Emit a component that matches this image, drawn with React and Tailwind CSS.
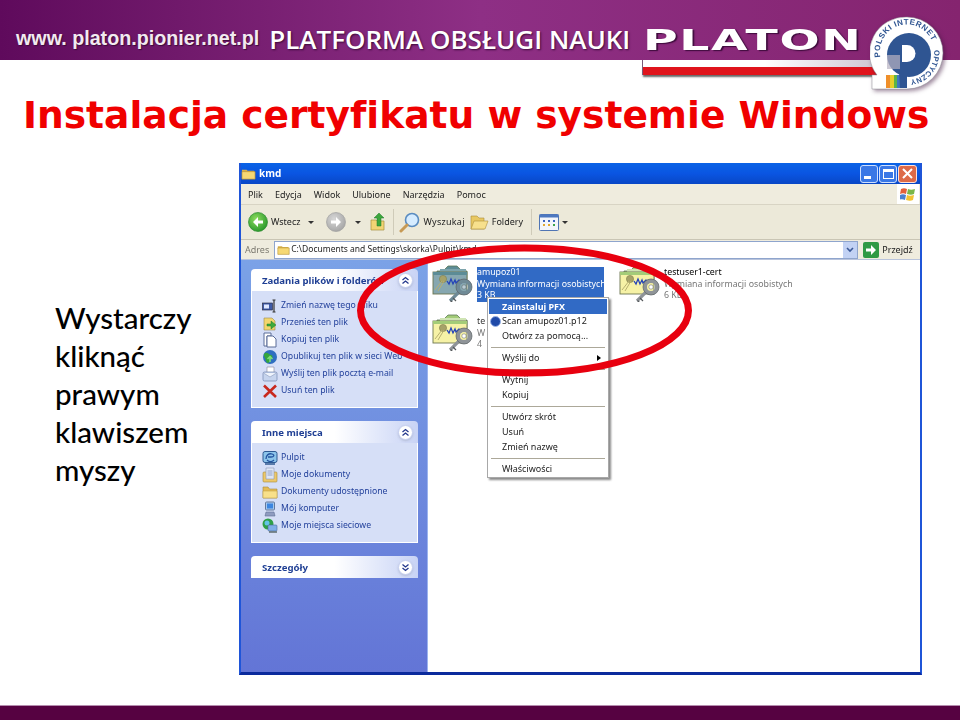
import React from "react";

const ui = "font-['Noto_Sans',sans-serif]";

function Cert({ tint = false }) {
  const paper = tint ? "#86a7b0" : "#f6f2a6";
  const top = tint ? "#5c8c96" : "#a3cc78";
  const key = tint ? "#6f8a96" : "#8f9498";
  return (
    <svg width="42" height="38" viewBox="0 0 42 38" className="shrink-0">
      <path d="M5 7 h6 l2-2 l3-3 h9 l3 3 l2 2 h5 v8 h-30z" fill={top} stroke="#5d7a58" strokeWidth="0.8" />
      <path d="M8 5 h26 v3 H8z" fill={tint ? "#7da4ac" : "#cfe4b4"} />
      <rect x="1" y="8" width="34" height="22" fill={paper} stroke="#6d7650" strokeWidth="0.9" />
      <path d="M1 8 h34 v3 H1z" fill={top} />
      <circle cx="11" cy="15" r="3.6" fill="#a6a268" stroke="#80804c" strokeWidth=".6" />
      <path d="M10 17 L3 26 M12 17 L6 27" stroke="#b8b070" strokeWidth="1" />
      <path d="M15 17 l2 3 2-5 2 5 2-4 1 3 3-3 2 3 2-2" fill="none" stroke="#2544b8" strokeWidth="1.3" />
      <path d="M27 28 L18 37" stroke={key} strokeWidth="3.2" />
      <path d="M21 34 l3 3 M18.5 36.5 l2 2" stroke="#55595c" strokeWidth="1.2" />
      <circle cx="32" cy="23" r="6" fill="none" stroke={key} strokeWidth="4" />
      <circle cx="32" cy="23" r="8" fill="none" stroke="#5a6064" strokeWidth=".7" />
      <circle cx="32" cy="23" r="2.2" fill={tint ? "#b8ccd4" : "#fff"} stroke="#5a6064" strokeWidth=".5" />
    </svg>
  );
}

function Chevrons({ down = false }) {
  return (
    <span className="w-[15px] h-[15px] rounded-full bg-white border border-[#c5cff0] flex items-center justify-center shadow-sm">
      <svg width="9" height="9" viewBox="0 0 9 9" fill="none" stroke="#24388c" strokeWidth="1.3">
        {down ? <path d="M1.5 1.5 4.5 4 7.5 1.5M1.5 5 4.5 7.5 7.5 5" /> : <path d="M1.5 4 4.5 1.5 7.5 4M1.5 7.5 4.5 5 7.5 7.5" />}
      </svg>
    </span>
  );
}

function Folder({ s = 14 }) {
  return (
    <svg width={s} height={s} viewBox="0 0 16 16" className="shrink-0">
      <path d="M1 4 h5 l1 1 h7 v2 H1z" fill="#d9b24e" />
      <path d="M1 6 h14 v8 H1z" fill="#f6d873" stroke="#b58d32" strokeWidth="0.7" />
    </svg>
  );
}

const TaskIcons = {
  rename: <svg width="16" height="16" viewBox="0 0 16 16"><rect x="0.5" y="5" width="10" height="7" fill="#3e5aa8" stroke="#223" strokeWidth=".6" /><rect x="2" y="6.5" width="5" height="4" fill="#dfe8ff" /><path d="M12 2v12M10.5 2h3M10.5 14h3" stroke="#333" strokeWidth="1.2" /></svg>,
  move: <svg width="16" height="16" viewBox="0 0 16 16"><path d="M2 3h8l3 3v9H2z" fill="#f3d66e" stroke="#9a8a4a" strokeWidth=".6" /><path d="M5 9h4V6l5 4-5 4v-3H5z" fill="#3eaa3c" stroke="#1f7a2a" strokeWidth=".5" /></svg>,
  copy: <svg width="16" height="16" viewBox="0 0 16 16"><path d="M2 1h7v3H5v10H2z" fill="#fff" stroke="#5a6c98" /><path d="M5 4h6l3 3v8H5z" fill="#fff" stroke="#5a6c98" /></svg>,
  web: <svg width="16" height="16" viewBox="0 0 16 16"><circle cx="8" cy="8" r="7" fill="#2f6fc0" /><path d="M3 4c3-1 4 2 6 2s2 3 0 4-1 4-3 4-2-3-3-5-2-3 0-5z" fill="#33a53d" /><path d="M8 13V8M5.5 10 8 7.5 10.5 10" stroke="#7fe07a" strokeWidth="1.5" fill="none" /></svg>,
  mail: <svg width="16" height="16" viewBox="0 0 16 16"><path d="M5 1h7v8H5z" fill="#fff" stroke="#889" strokeWidth=".6" /><rect x="1" y="6" width="14" height="9" rx="1.5" fill="#c6d4ee" stroke="#7487b0" strokeWidth=".7" /><path d="M1.5 7 8 11l6.5-4" fill="#eef3fc" stroke="#8899bb" strokeWidth=".6" /></svg>,
  del: <svg width="16" height="16" viewBox="0 0 16 16"><path d="M2 2.5 14 14M14 2.5 2 14" stroke="#c8281e" strokeWidth="2.6" /></svg>,
  desktop: <svg width="16" height="16" viewBox="0 0 16 16"><rect x="1" y="1.5" width="14" height="11" rx="2" fill="#8cc4ea" stroke="#2e5a92" /><path d="M4 9c0-4 3-6 6-5s2 3-1 3H6M5 10c2 2 5 2 7 0" fill="none" stroke="#23539f" strokeWidth="1.3" /><path d="M3 14h10" stroke="#2e5a92" strokeWidth="1.5" /></svg>,
  docs: <svg width="16" height="16" viewBox="0 0 16 16"><rect x="1" y="5" width="14" height="10" rx="1" fill="#edc869" stroke="#a68a3e" strokeWidth=".6" /><path d="M4 1h8v11H4z" fill="#dfe6f4" stroke="#8a97b5" strokeWidth=".6" /><path d="M5.5 4h5M5.5 6h5M5.5 8h5" stroke="#7c8fc0" strokeWidth=".8" /></svg>,
  shared: <svg width="16" height="16" viewBox="0 0 16 16"><path d="M1 3h5l1.5 2H15v9H1z" fill="#e5bd56" stroke="#a68a3e" strokeWidth=".6" /><path d="M1 7h14v7H1z" fill="#f8e08a" stroke="#b9983f" strokeWidth=".5" /></svg>,
  pc: <svg width="16" height="16" viewBox="0 0 16 16"><rect x="3.5" y="1" width="9" height="8" rx="1" fill="#a6c9ee" stroke="#64799c" /><rect x="5" y="2.5" width="6" height="5" fill="#3c86e0" /><path d="M4 11h8l1 4H3z" fill="#8f9cc0" stroke="#5f6f94" strokeWidth=".6" /></svg>,
  net: <svg width="16" height="16" viewBox="0 0 16 16"><circle cx="6" cy="6" r="5.5" fill="#2f9f48" /><circle cx="5" cy="5" r="2.5" fill="#62c3e8" /><rect x="6" y="7" width="9" height="6" rx="1" fill="#7faee8" stroke="#4b6a9c" strokeWidth=".6" /><path d="M7 14h8" stroke="#566" strokeWidth="1.4" /></svg>,
};

function Panel({ title, rows, bodyClass, down }) {
  return (
    <section className="w-[167px]">
      <div className="h-[22px] rounded-t-[4px] bg-gradient-to-r from-white via-white to-[#c8d3f5] flex items-center justify-between pl-[11px] pr-[5px]">
        <span className="text-[9.6px] font-bold text-[#1f3f94] pt-[3px]">{title}</span>
        <Chevrons down={down} />
      </div>
      {rows && (
        <ul className={`${bodyClass} bg-[#d6dff7] border border-t-0 border-white flex flex-col pl-[10px]`}>
          {rows.map(([icon, label]) => (
            <li key={label} className="h-[17px] flex items-center gap-[3px] text-[8.7px] text-[#24429c] whitespace-nowrap">
              <span className="w-[16px] h-[16px] shrink-0">{TaskIcons[icon]}</span>
              {label}
            </li>
          ))}
        </ul>
      )}
    </section>
  );
}

function MenuItem({ children, active, arrow, icon }) {
  return (
    <div className={`h-[15px] flex items-center pl-[13px] pr-[6px] relative whitespace-nowrap ${active ? "bg-[#316ac5] text-white font-bold" : "text-[#222] pb-[1px]"}`}>
      {icon && <span className="absolute left-[1px] top-[2px] w-[11px] h-[11px] rounded-full bg-[#1f4aa8] border border-[#9bb6e8]" />}
      <span className="flex-1">{children}</span>
      {arrow && <span className="w-0 h-0 border-y-[3.5px] border-y-transparent border-l-[4px] border-l-black" />}
    </div>
  );
}

const Sep = ({ cls }) => <div className={`${cls} border-t border-[#aca899] mx-[2px]`} />;

const DropArrow = ({ cls = "" }) => <span className={`${cls} w-0 h-0 border-x-[3px] border-x-transparent border-t-[3px] border-t-[#333]`} />;

function NavCircle({ grey, flip, id }) {
  return (
    <svg width="20" height="20" viewBox="0 0 20 20" className="shrink-0">
      <defs>
        <radialGradient id={id} cx="40%" cy="35%" r="70%">
          <stop offset="0" stopColor={grey ? "#d8d8d8" : "#8edc5e"} />
          <stop offset="1" stopColor={grey ? "#a4a4a4" : "#26962a"} />
        </radialGradient>
      </defs>
      <circle cx="10" cy="10" r="9.5" fill={`url(#${id})`} stroke={grey ? "#a0a0a0" : "#2b8a2e"} strokeWidth=".7" />
      <path d={flip ? "M5 8.5h5V5l5 5-5 5v-3.5H5z" : "M15 8.5h-5V5l-5 5 5 5v-3.5h5z"} fill="#fff" />
    </svg>
  );
}

function Logo() {
  return (
    <div className="absolute left-[642px] top-0 w-[318px] h-[92px]">
      <span className="absolute left-[1px] top-[22px] font-['DejaVu_Sans',sans-serif] font-bold text-[29px] leading-[36px] text-white tracking-[1px] origin-left scale-x-[1.63] [text-shadow:1px_1px_1px_#3b0a3a]">PLATON</span>
      <div className="absolute left-0 top-[60px] w-[245px] h-[7px] bg-gradient-to-r from-white via-white to-[#c9c2cf] border-l border-[#7a5a78]" />
      <div className="absolute left-0 top-[67px] w-[245px] h-[8px] bg-[#e0141c] border-l border-[#7a5a78] shadow-[1px_2px_2px_#666]" />
      <svg width="80" height="92" viewBox="0 0 80 92" className="absolute left-[228px] top-0 drop-shadow-[2px_2px_2px_rgba(60,20,60,0.5)]">
        <defs>
          <path id="ringtop" d="M10.5 57 A 27 27 0 0 1 63.5 46" />
          <path id="ringbot" d="M64 50 A 27 27 0 0 1 37 80" />
        </defs>
        <path d="M37 17 A36 36 0 1 1 37 89 H2 V75 H7 A36 36 0 0 1 37 17z" fill="#fff" stroke="#8a8a92" strokeWidth=".5" />
        <rect x="16" y="75" width="4" height="13" fill="#ef8f2a" />
        <rect x="20" y="75" width="4" height="13" fill="#e8cf2c" />
        <rect x="24" y="75" width="3" height="13" fill="#5cb548" />
        <rect x="27" y="75" width="3" height="13" fill="#3e78c2" />
        <circle cx="39" cy="55" r="22" fill="#2f5592" />
        <path d="M29 70 H37 V88 H30z" fill="#2f5592" />
        <path d="M17 55 h13 v14 h-13z" fill="#b8b2c2" opacity=".7" />
        <path d="M32 45 h5 a8.5 8.5 0 0 1 0 17 h-5z" fill="#fff" />
        <text className="font-['Liberation_Sans',sans-serif] font-bold" fontSize="8" fill="#2f5592" letterSpacing=".5"><textPath href="#ringtop">POLSKI INTERNET</textPath></text>
        <text className="font-['Liberation_Sans',sans-serif] font-bold" fontSize="7.6" fill="#2f5592" letterSpacing=".1"><textPath href="#ringbot">OPTYCZNY</textPath></text>
      </svg>
    </div>
  );
}

export default function App() {
  return (
    <div className="relative w-[960px] h-[720px] bg-white overflow-hidden flex flex-col">
      <header className="relative h-[60px] shrink-0 bg-gradient-to-r from-[#5f0a5c] via-[#8e2f85] to-[#85246f] flex items-end pb-[9px] pl-[16px] gap-[10px]">
        <span className="font-['Liberation_Sans',sans-serif] font-bold text-[19.7px] leading-[24px] text-[#f2eaf0] [text-shadow:1px_1px_1px_#3b0a3a] pb-[1px]">www. platon.pionier.net.pl</span>
        <span className="font-['Open_Sans',sans-serif] font-semibold text-[26px] leading-[24px] text-white [text-shadow:1px_1px_2px_#3b0a3a]">PLATFORMA OBSŁUGI NAUKI</span>
      </header>
      <Logo />

      <h1 className="h-[103px] shrink-0 pl-[23px] pt-[33px] font-['DejaVu_Sans',sans-serif] font-bold text-[37.6px] leading-[44px] text-[#f00000] whitespace-nowrap [font-variant-ligatures:none]">
        Instalacja certyfikatu w systemie Windows
      </h1>

      <main className="flex h-[512px] shrink-0">
        <p className="w-[239px] pl-[55px] pt-[136px] font-['Lato',sans-serif] font-medium text-[29.5px] leading-[38px] text-black">
          Wystarczy kliknąć prawym klawiszem myszy
        </p>

        <div className={`${ui} relative w-[683px] h-[512px] flex flex-col bg-white border-x-[2px] border-x-[#1f55d8] border-b-[3px] border-b-[#0a2a9c] blur-[0.35px]`}>
          <div className="h-[21px] shrink-0 bg-gradient-to-b from-[#0b63e6] via-[#0a55e2] to-[#0847c6] flex items-center pr-[3px] gap-[3px]">
            <Folder s={15} />
            <span className="text-white font-bold text-[10px]">kmd</span>
            <span className="ml-auto flex gap-[1px]">
              <span className="w-[18px] h-[18px] rounded-[3px] bg-[#3a78e6] border border-[#cfe0ff] flex items-end pl-[3px] pb-[3px]"><span className="w-[7px] h-[3px] bg-white" /></span>
              <span className="w-[18px] h-[18px] rounded-[3px] bg-[#3a78e6] border border-[#cfe0ff] flex items-center justify-center"><span className="w-[11px] h-[10px] border border-white border-t-[3px]" /></span>
              <span className="w-[19px] h-[18px] rounded-[3px] bg-[#dd6a48] border border-[#ffe0d6] flex items-center justify-center">
                <svg width="11" height="11" viewBox="0 0 11 11" stroke="#fff" strokeWidth="2"><path d="M1 1l9 9M10 1l-9 9" /></svg>
              </span>
            </span>
          </div>

          <div className="h-[21px] shrink-0 bg-[#efecde] border-b border-[#d8d4c4] flex items-center pl-[7px] gap-[12px] text-[9px] text-[#222]">
            <span className="pt-[1px]">Plik</span><span className="pt-[1px]">Edycja</span><span className="pt-[1px]">Widok</span><span className="pt-[1px]">Ulubione</span><span className="pt-[1px]">Narzędzia</span><span className="pt-[1px]">Pomoc</span>
            <span className="ml-auto w-[22px] mr-[1px] h-full bg-white flex items-center justify-center">
              <svg width="16" height="15" viewBox="0 0 16 15"><path d="M1 2c2-1 4-1 6 0l-1 5c-2-1-4-1-6 0z" fill="#e2603a" /><path d="M8 2c2 1 4 1 7 0l-1 5c-2 1-4 1-7 0z" fill="#7ab648" /><path d="M0 8c2-1 4-1 6 0l-1 5c-2-1-4-1-6 0z" fill="#4a80d0" /><path d="M7 8c2 1 4 1 7 0l-1 5c-2 1-4 1-7 0z" fill="#f1c232" /></svg>
            </span>
          </div>

          <div className="h-[35px] shrink-0 bg-[#ece9d9] border-b border-[#c9c5b4] flex items-center pl-[7px] text-[9px] text-[#222]">
            <NavCircle id="gback" />
            <span className="ml-[3px]">Wstecz</span>
            <DropArrow cls="ml-[8px]" />
            <span className="ml-[12px]"><NavCircle id="gfwd" grey flip /></span>
            <DropArrow cls="ml-[9px]" />
            <svg width="18" height="20" viewBox="0 0 18 20" className="ml-[9px] shrink-0"><path d="M1 8h5l1 1h7v9H1z" fill="#f1d474" stroke="#a8903e" strokeWidth=".7" /><path d="M7 14V6H4l5-5 5 5h-3v8z" fill="#3ca63c" stroke="#1f7a2a" strokeWidth=".5" /></svg>
            <span className="ml-[5px] w-px h-[26px] bg-[#cfcbb9]" />
            <svg width="21" height="21" viewBox="0 0 21 21" className="ml-[5px] shrink-0"><circle cx="13" cy="8" r="6.5" fill="#d6ecff" stroke="#5a8cc0" strokeWidth="1.6" /><path d="M8 13 2 19" stroke="#c79a55" strokeWidth="3" strokeLinecap="round" /></svg>
            <span className="ml-[3px] tracking-[.25px]">Wyszukaj</span>
            <svg width="19" height="18" viewBox="0 0 19 18" className="ml-[5px] shrink-0"><path d="M1 3h6l2 2h5v11H1z" fill="#e8c862" stroke="#ad8e3a" strokeWidth=".6" /><path d="M4 8h14l-3 8H1z" fill="#f7e08c" stroke="#ad8e3a" strokeWidth=".6" /></svg>
            <span className="ml-[3px]">Foldery</span>
            <span className="ml-[8px] w-px h-[26px] bg-[#cfcbb9]" />
            <svg width="20" height="17" viewBox="0 0 20 17" className="ml-[7px] shrink-0"><rect x=".5" y=".5" width="19" height="16" rx="1" fill="#f4f6fb" stroke="#5075b4" /><rect x=".5" y=".5" width="19" height="3" fill="#4d78c0" /><path d="M4 6h2v2H4zM9 6h2v2H9zM14 6h2v2h-2z" fill="#3c64c0" /><path d="M4 10h2v2H4zM9 10h2v2H9z" fill="#e0a830" /><path d="M14 10h2v2h-2z" fill="#3ca64a" /></svg>
            <DropArrow cls="ml-[3px]" />
          </div>

          <div className="h-[20px] shrink-0 bg-[#efecde] border-b border-[#b9c4dc] flex items-center text-[9px] pl-[4px]">
            <span className="text-[#7c7a70]">Adres</span>
            <div className="ml-[5px] w-[584px] h-[18px] bg-white border border-[#8fa5cd] flex items-center pl-[2px] gap-[1px] text-[#222] text-[8.5px]">
              <Folder s={13} />
              <span>C:\Documents and Settings\skorka\Pulpit\kmd</span>
              <span className="ml-auto w-[14px] h-[16px] bg-[#c2d2f4] flex items-center justify-center">
                <svg width="8" height="6" viewBox="0 0 8 6" fill="none" stroke="#3c5a98" strokeWidth="1.6"><path d="M1 1l3 3 3-3" /></svg>
              </span>
            </div>
            <svg width="16" height="16" viewBox="0 0 16 16" className="ml-[5px] shrink-0"><rect width="16" height="16" rx="2" fill="#2f9a45" /><path d="M3 6.5h5V3l5 5-5 5V9.5H3z" fill="#fff" /></svg>
            <span className="ml-[3px] text-[#222]">Przejdź</span>
          </div>

          <div className="flex-1 flex min-h-0">
            <aside className="w-[187px] shrink-0 bg-gradient-to-b from-[#7ba2e7] to-[#6375d6] pl-[10px] pt-[9px] flex flex-col gap-[13px] border-r border-[#9cb4ee]">
              <Panel bodyClass="h-[117px] pt-[6px]" title="Zadania plików i folderów" rows={[["rename", "Zmień nazwę tego pliku"], ["move", "Przenieś ten plik"], ["copy", "Kopiuj ten plik"], ["web", "Opublikuj ten plik w sieci Web"], ["mail", "Wyślij ten plik pocztą e-mail"], ["del", "Usuń ten plik"]]} />
              <Panel bodyClass="h-[100px] pt-[6px]" title="Inne miejsca" rows={[["desktop", "Pulpit"], ["docs", "Moje dokumenty"], ["shared", "Dokumenty udostępnione"], ["pc", "Mój komputer"], ["net", "Moje miejsca sieciowe"]]} />
              <Panel title="Szczegóły" down />
            </aside>

            <div className="flex-1 grid grid-cols-[187px_1fr] auto-rows-[49px] pl-[4px] pt-[4px] text-[8.8px] leading-[11.5px] text-[#333]">
              <div className="flex gap-[3px] items-start">
                <Cert tint />
                <div className="bg-[#316ac5] text-white w-[127px] h-[35px] mt-[3px] whitespace-nowrap">
                  amupoz01<br />Wymiana informacji osobistych<br />3 KB
                </div>
              </div>
              <div className="flex gap-[3px] items-start">
                <Cert />
                <div className="mt-[3px] whitespace-nowrap">
                  <span className="text-black">testuser1-cert</span><br /><span className="text-[#777]">Wymiana informacji osobistych</span><br /><span className="text-[#777]">6 KB</span>
                </div>
              </div>
              <div className="flex gap-[3px] items-start">
                <Cert />
                <div className="mt-[3px] whitespace-nowrap">te<br /><span className="text-[#777]">W</span><br /><span className="text-[#777]">4</span></div>
              </div>
            </div>
          </div>

          <div className="absolute left-[246px] top-[134px] w-[122px] h-[181px] bg-white border border-[#a8a8a8] shadow-[2px_2px_2px_#8a8a8a] p-[1px] text-[9px]">
            <MenuItem active>Zainstaluj PFX</MenuItem>
            <MenuItem icon>Scan amupoz01.p12</MenuItem>
            <MenuItem>Otwórz za pomocą...</MenuItem>
            <Sep cls="my-[3px]" />
            <MenuItem arrow>Wyślij do</MenuItem>
            <Sep cls="my-[3px]" />
            <MenuItem>Wytnij</MenuItem>
            <MenuItem>Kopiuj</MenuItem>
            <Sep cls="my-[3px]" />
            <MenuItem>Utwórz skrót</MenuItem>
            <MenuItem>Usuń</MenuItem>
            <MenuItem>Zmień nazwę</MenuItem>
            <Sep cls="my-[3px]" />
            <MenuItem>Właściwości</MenuItem>
          </div>
        </div>
      </main>

      <footer className="mt-auto h-[15px] shrink-0 bg-[#560241] border-t border-[#b58cae]" />

      <svg width="960" height="720" viewBox="0 0 960 720" className="absolute inset-0 pointer-events-none">
        <ellipse cx="524.5" cy="310.5" rx="164" ry="62.5" fill="none" stroke="#e8000f" strokeWidth="7" />
      </svg>
    </div>
  );
}
